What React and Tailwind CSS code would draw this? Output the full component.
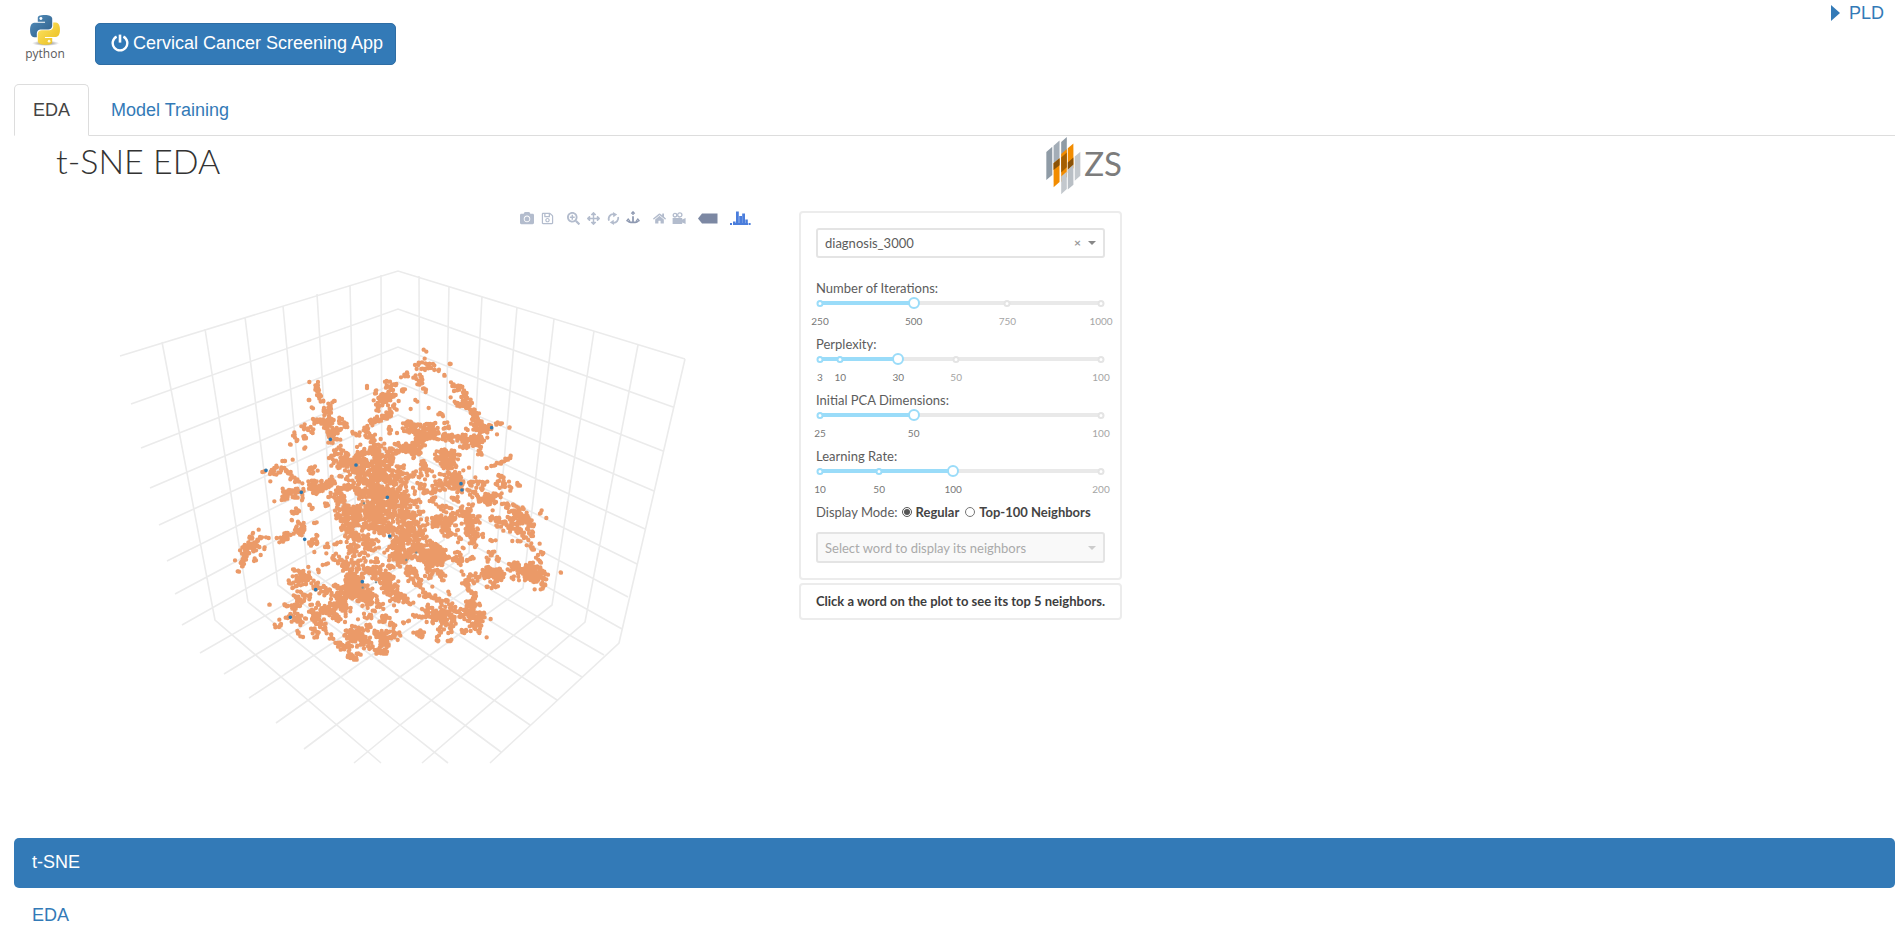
import React, { useState } from "react";
import {
  FaCamera,
  FaRegSave,
  FaSearchPlus,
  FaArrowsAlt,
  FaSyncAlt,
  FaHome,
  FaVideo,
} from "react-icons/fa";

/* ---------- scatter data ---------- */

// Each band: x1, y1, x2, y2, half width, number of points
const BANDS = [
  [581, 28, 597, 42, 2, 2], [585, 55, 585, 55, 1, 1], [560, 78, 605, 82, 9, 20], [605, 84, 628, 90, 5, 5],
  [656, 74, 663, 72, 3, 3], [642, 102, 648, 114, 3, 3], [510, 104, 535, 102, 8, 9], [552, 118, 572, 120, 12, 13],
  [663, 127, 663, 127, 1, 1], [672, 142, 698, 136, 9, 13], [582, 150, 584, 154, 7, 5], [515, 154, 530, 142, 5, 6],
  [700, 160, 738, 225, 9, 30], [678, 186, 706, 195, 9, 14], [662, 171, 662, 171, 1, 1], [556, 182, 565, 184, 3, 2],
  [541, 207, 541, 207, 1, 1], [597, 205, 597, 205, 1, 1], [610, 216, 645, 229, 4, 7], [648, 250, 650, 275, 9, 8],
  [735, 230, 760, 290, 12, 26], [725, 262, 785, 268, 11, 28], [785, 252, 815, 248, 5, 7], [838, 262, 838, 262, 2, 2],
  [800, 283, 800, 283, 1, 1], [705, 247, 712, 268, 5, 2], [740, 290, 770, 300, 8, 10], [745, 310, 750, 345, 7, 10],
  [410, 138, 412, 143, 2, 2], [430, 158, 446, 151, 5, 4], [445, 178, 492, 178, 15, 40], [478, 132, 480, 165, 10, 14],
  [485, 133, 502, 133, 5, 4], [466, 125, 466, 125, 1, 1], [442, 200, 446, 214, 6, 5], [428, 245, 490, 215, 9, 32],
  [412, 258, 412, 258, 1, 1], [480, 250, 480, 282, 4, 6], [502, 280, 502, 280, 1, 1],
  [262, 125, 262, 155, 7, 12], [265, 165, 278, 188, 7, 10], [239, 126, 239, 126, 1, 1], [236, 162, 236, 186, 2, 2],
  [246, 202, 251, 208, 2, 2], [292, 195, 292, 225, 10, 14], [302, 185, 314, 186, 4, 4], [250, 245, 335, 245, 9, 25],
  [290, 230, 310, 290, 12, 22], [300, 285, 330, 260, 9, 16], [340, 240, 352, 262, 7, 7], [362, 276, 378, 286, 4, 3],
  [275, 262, 290, 268, 8, 5], [205, 255, 245, 272, 8, 12], [222, 280, 228, 300, 6, 6], [190, 280, 202, 305, 7, 6],
  [180, 313, 183, 311, 4, 3], [222, 325, 232, 320, 3, 3], [290, 315, 318, 298, 7, 7], [330, 300, 330, 300, 2, 1],
  [395, 270, 430, 290, 10, 14], [378, 286, 412, 288, 4, 5], [382, 320, 382, 320, 1, 1], [452, 297, 452, 297, 1, 1],
  [420, 295, 435, 310, 9, 6], [520, 262, 620, 265, 13, 55], [555, 290, 615, 285, 14, 42], [620, 290, 755, 300, 10, 55],
  [500, 325, 575, 320, 12, 46], [530, 245, 535, 255, 6, 4], [555, 330, 560, 345, 12, 14], [480, 340, 500, 350, 15, 16],
  [625, 345, 685, 350, 16, 48], [690, 315, 735, 315, 8, 14], [640, 375, 672, 380, 12, 26],
  [320, 335, 335, 325, 9, 9], [312, 365, 400, 350, 17, 58], [350, 375, 420, 375, 14, 38], [405, 325, 465, 330, 14, 32],
  [430, 350, 480, 360, 15, 34], [395, 395, 480, 395, 20, 95], [405, 430, 475, 430, 20, 95], [410, 470, 480, 475, 24, 115],
  [405, 510, 490, 510, 20, 90], [395, 545, 450, 545, 18, 46], [430, 560, 480, 560, 22, 45], [485, 450, 520, 470, 20, 34],
  [500, 385, 530, 430, 18, 32], [500, 490, 550, 490, 18, 30], [500, 520, 555, 550, 22, 65], [505, 570, 555, 600, 22, 75],
  [475, 640, 540, 640, 22, 65], [500, 600, 500, 625, 15, 30], [550, 575, 585, 580, 14, 18], [545, 625, 580, 610, 15, 22],
  [585, 620, 640, 650, 20, 60], [590, 655, 645, 660, 18, 50], [565, 640, 585, 650, 15, 20], [560, 490, 570, 520, 9, 8],
  [545, 405, 575, 420, 14, 14], [580, 375, 600, 395, 13, 15], [560, 455, 625, 440, 14, 20], [600, 465, 620, 495, 9, 11],
  [615, 425, 690, 410, 15, 42], [640, 440, 690, 435, 12, 18], [680, 400, 690, 470, 12, 22], [675, 475, 685, 475, 9, 8],
  [717, 383, 717, 383, 1, 1], [700, 390, 700, 390, 1, 1], [735, 412, 735, 412, 1, 1], [705, 442, 760, 440, 13, 22],
  [760, 432, 770, 424, 4, 5], [770, 383, 770, 383, 1, 1], [785, 382, 842, 350, 5, 20], [800, 400, 810, 412, 3, 3],
  [810, 425, 835, 440, 15, 18], [858, 430, 876, 440, 5, 5], [800, 455, 812, 465, 8, 4], [725, 465, 740, 470, 8, 7],
  [755, 480, 800, 475, 12, 24], [770, 455, 790, 500, 10, 17], [820, 495, 835, 500, 6, 5],
  [835, 500, 880, 520, 12, 26], [860, 530, 905, 545, 15, 38], [800, 545, 850, 545, 13, 22], [820, 565, 870, 565, 14, 22],
  [937, 504, 930, 522, 3, 3], [948, 533, 948, 533, 1, 1], [780, 530, 800, 545, 8, 5], [880, 570, 910, 590, 15, 12],
  [765, 602, 802, 602, 2, 5], [830, 605, 875, 605, 4, 5], [895, 610, 905, 640, 8, 8], [925, 610, 930, 640, 8, 5],
  [915, 655, 938, 670, 7, 6], [720, 500, 725, 500, 8, 6], [640, 510, 670, 510, 12, 10], [680, 515, 735, 530, 16, 45],
  [600, 548, 670, 540, 16, 55], [640, 575, 670, 570, 15, 22], [700, 545, 740, 560, 16, 32], [720, 570, 735, 610, 12, 22],
  [740, 580, 760, 585, 8, 7], [680, 590, 700, 625, 8, 8], [670, 655, 695, 665, 10, 14], [710, 664, 735, 650, 5, 9],
  [672, 635, 690, 640, 6, 5], [790, 630, 780, 645, 8, 7], [800, 650, 805, 665, 6, 5], [771, 655, 771, 680, 7, 6],
  [840, 675, 880, 690, 13, 18], [870, 705, 925, 700, 14, 38], [900, 690, 935, 715, 20, 60], [908, 745, 945, 750, 4, 3],
  [840, 715, 850, 715, 7, 3], [932, 725, 944, 745, 4, 4], [990, 697, 993, 698, 1, 2], [755, 700, 800, 695, 12, 24],
  [780, 715, 815, 700, 14, 34], [765, 735, 805, 740, 6, 10], [705, 720, 740, 715, 13, 25], [700, 735, 715, 745, 8, 10],
  [730, 755, 735, 775, 8, 9], [695, 693, 695, 693, 1, 1], [720, 780, 720, 815, 12, 18], [700, 785, 745, 790, 9, 14],
  [725, 820, 755, 830, 14, 30], [725, 845, 745, 860, 12, 22], [760, 818, 764, 820, 2, 2], [781, 838, 782, 838, 1, 1],
  [770, 892, 770, 892, 1, 1], [700, 875, 720, 870, 8, 8], [745, 875, 750, 878, 3, 3], [685, 810, 705, 825, 13, 14],
  [600, 830, 680, 830, 16, 60], [640, 815, 665, 860, 14, 26], [590, 800, 605, 815, 12, 12], [640, 795, 670, 795, 12, 12],
  [550, 825, 590, 830, 6, 9], [575, 770, 605, 765, 12, 14], [608, 740, 610, 740, 2, 1], [657, 755, 658, 765, 3, 2],
  [615, 775, 640, 785, 6, 5], [568, 880, 585, 885, 8, 14], [550, 878, 550, 878, 1, 1], [626, 890, 620, 910, 5, 5],
  [655, 902, 665, 905, 6, 7], [630, 865, 655, 875, 10, 9],
  [108, 392, 98, 396, 3, 3], [130, 395, 160, 385, 14, 18], [122, 423, 122, 423, 1, 1], [155, 362, 165, 362, 3, 3],
  [188, 359, 188, 359, 1, 1], [165, 385, 180, 400, 7, 7], [180, 405, 190, 422, 8, 7], [195, 422, 215, 425, 7, 6],
  [150, 462, 210, 460, 12, 36], [132, 482, 134, 484, 1, 1], [155, 475, 165, 478, 6, 5], [218, 440, 218, 485, 5, 6],
  [240, 385, 265, 383, 8, 9], [242, 400, 255, 400, 4, 3], [235, 430, 300, 435, 12, 34], [240, 450, 280, 440, 12, 16],
  [300, 405, 310, 430, 7, 6], [305, 455, 340, 470, 15, 26], [340, 440, 365, 440, 10, 12], [330, 405, 335, 412, 5, 3],
  [345, 398, 400, 425, 14, 22], [370, 450, 395, 465, 10, 14], [285, 490, 293, 503, 6, 6], [240, 485, 245, 510, 5, 5],
  [320, 480, 345, 495, 8, 6], [315, 520, 390, 520, 15, 46], [340, 505, 375, 510, 12, 18], [330, 545, 390, 560, 16, 35],
  [340, 575, 385, 585, 13, 22], [375, 600, 430, 600, 14, 20], [350, 605, 350, 605, 2, 1], [190, 505, 205, 530, 8, 10],
  [185, 540, 185, 540, 2, 2], [210, 545, 215, 580, 12, 18], [195, 575, 225, 575, 9, 12], [248, 549, 265, 549, 3, 4],
  [155, 602, 178, 580, 9, 15], [140, 594, 140, 594, 1, 1], [225, 605, 260, 605, 9, 12], [255, 585, 265, 590, 3, 3],
  [253, 636, 253, 636, 1, 1], [285, 612, 295, 620, 7, 4], [310, 610, 330, 610, 5, 4], [287, 640, 290, 640, 1, 1],
  [310, 640, 345, 680, 11, 20], [275, 678, 292, 670, 4, 4], [350, 640, 385, 640, 10, 12], [360, 615, 400, 630, 12, 12],
  [400, 610, 450, 620, 14, 18], [400, 645, 440, 660, 14, 14], [345, 670, 400, 670, 12, 16], [345, 690, 390, 700, 14, 16],
  [400, 690, 450, 690, 10, 22], [430, 705, 490, 725, 14, 44], [460, 740, 500, 755, 15, 34], [490, 765, 545, 785, 9, 24],
  [460, 680, 540, 675, 10, 14], [525, 690, 560, 700, 11, 25], [535, 720, 570, 720, 8, 9], [590, 700, 600, 712, 12, 8],
  [570, 680, 600, 690, 8, 8], [625, 700, 645, 715, 9, 12], [560, 735, 575, 740, 8, 7], [600, 680, 620, 690, 7, 5],
  [85, 569, 85, 569, 1, 1], [70, 580, 55, 605, 6, 8], [90, 590, 112, 597, 5, 5], [75, 600, 65, 635, 10, 17],
  [55, 615, 35, 640, 8, 16], [50, 640, 32, 680, 7, 18], [28, 690, 25, 704, 4, 4], [90, 620, 108, 625, 4, 4],
  [68, 665, 90, 645, 5, 4], [15, 662, 15, 662, 1, 1], [40, 660, 48, 660, 3, 3],
  [235, 681, 235, 681, 1, 1], [263, 692, 270, 704, 6, 3], [190, 690, 195, 695, 4, 3], [185, 722, 240, 715, 14, 34],
  [205, 700, 225, 700, 10, 9], [190, 745, 190, 745, 3, 2], [245, 735, 265, 735, 10, 10], [265, 745, 300, 760, 11, 18],
  [305, 735, 330, 740, 7, 9], [330, 760, 385, 745, 15, 46], [360, 735, 410, 760, 18, 70], [380, 770, 430, 770, 13, 40],
  [400, 780, 425, 790, 7, 14], [300, 785, 345, 790, 14, 30], [330, 800, 355, 805, 11, 16], [355, 715, 390, 720, 12, 20],
  [200, 770, 220, 775, 14, 16], [185, 800, 215, 790, 9, 13], [165, 795, 175, 805, 6, 6], [117, 793, 119, 794, 1, 2],
  [230, 765, 245, 775, 8, 5], [240, 800, 260, 830, 10, 14], [180, 830, 215, 830, 12, 18], [190, 845, 225, 845, 8, 8],
  [140, 855, 158, 845, 8, 9], [135, 863, 135, 863, 2, 1], [200, 870, 216, 892, 5, 5], [265, 800, 305, 820, 12, 22],
  [255, 840, 290, 850, 12, 18], [245, 870, 270, 875, 8, 9], [250, 892, 272, 892, 3, 4], [285, 865, 300, 880, 8, 7],
  [292, 895, 312, 895, 3, 4], [310, 830, 345, 845, 10, 12], [305, 800, 320, 835, 9, 10], [345, 820, 350, 830, 5, 3],
  [400, 800, 415, 835, 9, 12], [383, 838, 383, 838, 1, 1], [435, 790, 460, 800, 9, 10], [450, 838, 480, 838, 9, 15],
  [430, 815, 445, 815, 5, 3], [485, 780, 500, 790, 9, 8], [500, 812, 500, 812, 2, 1], [510, 860, 535, 838, 5, 5],
  [480, 850, 495, 862, 7, 8], [365, 865, 395, 875, 10, 14], [410, 850, 420, 870, 7, 7], [345, 880, 410, 900, 12, 34],
  [320, 915, 360, 925, 11, 20], [365, 905, 420, 905, 12, 24], [355, 945, 385, 950, 9, 18], [410, 925, 430, 920, 9, 8],
  [440, 890, 500, 885, 12, 38], [450, 905, 470, 910, 12, 22], [440, 935, 468, 930, 9, 20], [425, 870, 440, 882, 5, 4],
];

const HIGHLIGHTS = [
  [785, 263], [301, 298], [378, 375], [108, 391], [214, 457], [472, 472], [693, 431], [696, 450],
  [479, 588], [224, 598], [397, 725], [257, 749], [181, 832],
];

const SMALL_HIGHLIGHTS = [[402, 490], [559, 638], [529, 660], [398, 743], [438, 727]];

function scatterPath() {
  let seed = 20177;
  const rand = () => {
    seed = (seed * 1664525 + 1013904223) % 4294967296;
    return seed / 4294967296;
  };
  let d = "";
  BANDS.forEach(([x1, y1, x2, y2, w, n]) => {
    const spread = w > 7 ? w * 1.35 : w;
    const count = n > 10 ? Math.round(n * 1.15) : n;
    for (let i = 0; i < count; i++) {
      const t = n === 1 ? 0.5 : rand();
      const a = rand() * Math.PI * 2;
      const r = Math.sqrt(rand()) * spread;
      const x = Math.round(x1 + (x2 - x1) * t + Math.cos(a) * r);
      const y = Math.round(y1 + (y2 - y1) * t + Math.sin(a) * r);
      d += `M${x} ${y}h.1`;
    }
  });
  return d;
}

const POINTS = scatterPath();
const dots = (list) => list.map(([x, y]) => `M${x} ${y}h.1`).join("");

const GRID = [
  // left wall, horizontals
  "M120 356L398 271L685 359", "M131 404L398 309L673 407", "M141 448L398 347L663 451", "M150 488L398 382L654 491",
  "M159 525L398 415L645 529", "M167 561L398 446L637 564", "M175 594L398 475L628 597", "M182 625L398 503L622 629",
  // verticals running on into the floor
  "M162 342L215 620L381 763", "M205 329L248 602L400 725L448 763", "M245 317L278 585L400 677L501 752",
  "M283 306L307 568L400 635L530 725", "M317 294L333 552L557 700", "M350 285L356 539L582 677", "M381 275L382 527L604 655",
  "M685 359L619 643L490 763", "M638 345L585 622L422 763", "M594 331L552 605L400 725L354 763",
  "M554 319L523 588L400 677L304 749", "M517 307L495 570L400 635L276 723", "M482 296L469 553L249 698",
  "M449 286L444 540L224 674", "M419 276L420 527L200 653",
].join("");

function TsnePlot() {
  return (
    <svg viewBox="100 230 600 534" className="block w-full" role="img" aria-label="t-SNE scatter plot">
      <path d={GRID} fill="none" stroke="#ebebeb" strokeWidth="1.6" />
      <g transform="translate(230 340) scale(.3333)" fill="none" strokeLinecap="round">
        <path d={POINTS} stroke="#eb9a68" strokeWidth="13" />
        <path d={dots(HIGHLIGHTS)} stroke="#2b78b0" strokeWidth="11" />
        <path d={dots(SMALL_HIGHLIGHTS)} stroke="#7d8f92" strokeWidth="7" />
      </g>
    </svg>
  );
}

/* ---------- logos and icons ---------- */

function PythonLogo() {
  return (
    <svg viewBox="0 0 24 25" className="h-[31px] w-[30px]" aria-hidden="true">
      <defs>
        <linearGradient id="pyBlue" x1="0" y1="0" x2="1" y2="1">
          <stop offset="0" stopColor="#5590bd" />
          <stop offset="1" stopColor="#2c5c88" />
        </linearGradient>
        <linearGradient id="pyYellow" x1="0" y1="0" x2="1" y2="1">
          <stop offset="0" stopColor="#ffe566" />
          <stop offset="1" stopColor="#e8bc1c" />
        </linearGradient>
        <radialGradient id="pyShade">
          <stop offset="0" stopColor="#666" />
          <stop offset="1" stopColor="#777" stopOpacity="0" />
        </radialGradient>
      </defs>
      <ellipse cx="12.5" cy="22.8" rx="11" ry="2.2" fill="url(#pyShade)" />
      <path
        fill="url(#pyBlue)"
        d="M14.25.18l.9.2.73.26.59.3.45.32.34.34.25.34.16.33.1.3.04.26.02.2-.01.13V8.5l-.05.63-.13.55-.21.46-.26.38-.3.31-.33.25-.35.19-.35.14-.33.1-.3.07-.26.04-.21.02H8.77l-.69.05-.59.14-.5.22-.41.27-.33.32-.27.35-.2.36-.15.37-.1.35-.07.32-.04.27-.02.21v3.06H3.17l-.21-.03-.28-.07-.32-.12-.35-.18-.36-.26-.36-.36-.35-.46-.32-.59-.28-.73-.21-.88-.14-1.05-.05-1.23.06-1.22.16-1.04.24-.87.32-.71.36-.57.4-.44.42-.33.42-.24.4-.16.36-.1.32-.05.24-.01h.16l.06.01h8.16v-.83H6.18l-.01-2.75-.02-.37.05-.34.11-.31.17-.28.25-.26.31-.23.38-.2.44-.18.51-.15.58-.12.64-.1.71-.06.77-.04.84-.02 1.27.05z"
      />
      <path
        fill="url(#pyYellow)"
        d="M21.04 6.11l.28.06.32.12.35.18.36.27.36.35.35.47.32.59.28.73.21.88.14 1.04.05 1.23-.06 1.23-.16 1.04-.24.86-.32.71-.36.57-.4.45-.42.33-.42.24-.4.16-.36.09-.32.05-.24.02-.16-.01h-8.22v.82h5.84l.01 2.76.02.36-.05.34-.11.31-.17.29-.25.25-.31.24-.38.2-.44.17-.51.15-.58.13-.64.09-.71.07-.77.04-.84.01-1.27-.04-1.07-.14-.9-.2-.73-.25-.59-.3-.45-.33-.34-.34-.25-.34-.16-.33-.1-.3-.04-.25-.02-.2.01-.13v-5.34l.05-.64.13-.54.21-.46.26-.38.3-.32.33-.24.35-.2.35-.14.33-.1.3-.06.26-.04.21-.02.13-.01h5.84l.69-.05.59-.14.5-.21.41-.28.33-.32.27-.35.2-.36.15-.36.1-.35.07-.32.04-.28.02-.21V6.07h2.09l.14.01z"
      />
      <circle cx="8.7" cy="2.9" r="1.2" fill="#fff" />
      <circle cx="15.3" cy="21.1" r="1.1" fill="#fffbe0" />
    </svg>
  );
}

function PowerIcon() {
  return (
    <svg viewBox="0 0 18 18" className="h-[18px] w-[18px]" fill="none" stroke="#fff" aria-hidden="true">
      <path d="M5.6 2.6A7.3 7.3 0 1 0 12.4 2.6" strokeWidth="2.4" />
      <path d="M9 .6V8.6" strokeWidth="2.6" />
    </svg>
  );
}

function ZsMark() {
  return (
    <svg viewBox="84 18 106 178" className="h-[59px] w-[35px]" aria-hidden="true">
      <path d="M85 66L103 50V136L85 151Z" fill="#8f9ba6" />
      <path d="M107 47L125 31V104L107 120Z" fill="#a3adb7" />
      <path d="M130 36L147 21V94L130 110Z" fill="#8f9ba6" />
      <path d="M107 100L125 85V157L107 173Z" fill="#f28c00" />
      <path d="M130 72L147 57V142L130 157Z" fill="#f28c00" />
      <path d="M150 55L167 40V115L150 130Z" fill="#f28c00" />
      <path d="M130 140L147 125V178L130 194Z" fill="#c3c8cd" />
      <path d="M150 118L167 103V165L150 180Z" fill="#b9bfc5" />
      <path d="M171 80L188 65V138L171 153Z" fill="#c3c8cd" />
      <path d="M107 100L125 85V106L107 121Z" fill="#8a5208" />
      <path d="M130 83L147 68V112L130 128Z" fill="#a35f04" />
      <path d="M150 98L167 83V104L150 119Z" fill="#8a5208" />
    </svg>
  );
}

function TurntableIcon() {
  return (
    <svg viewBox="0 0 16 16" className="h-[14px] w-[14px]" fill="none" stroke="currentColor" aria-hidden="true">
      <path d="M8 6V13" strokeWidth="2" />
      <path d="M8 1.5V4.5M6 3L8 1L10 3" strokeWidth="1.6" />
      <path d="M2 10.5C1 14 15 14 14 10.5" strokeWidth="2" />
      <path d="M.5 11.5L2.5 9L4.5 11.5M11.5 11.5L13.5 9L15.5 11.5" strokeWidth="1.2" />
    </svg>
  );
}

function MovieCameraIcon() {
  return (
    <svg viewBox="0 0 14 13" className="h-[13px] w-[14px]" aria-hidden="true">
      <circle cx="3" cy="3.2" r="1.8" fill="none" stroke="currentColor" strokeWidth="1.3" />
      <circle cx="7.8" cy="2.9" r="2.1" fill="none" stroke="currentColor" strokeWidth="1.3" />
      <path d="M.6 6h9.6v1.6L13.6 6v6l-3.4-1.6V12H.6z" fill="currentColor" />
    </svg>
  );
}

function OrbitIcon() {
  return (
    <svg viewBox="0 0 14 14" className="h-[13px] w-[13px]" aria-hidden="true">
      <path d="M2.2 9.2A5 5 0 0 1 7.6 2.4" fill="none" stroke="currentColor" strokeWidth="2" />
      <path d="M6.4 0L11 2.8L6.8 5.6Z" fill="currentColor" />
      <path d="M12 5.4A5 5 0 0 1 6.6 11.6" fill="none" stroke="currentColor" strokeWidth="2" />
      <path d="M7.6 14L3 11.4L7.2 8.4Z" fill="currentColor" />
    </svg>
  );
}

function TagIcon() {
  return (
    <svg viewBox="0 0 20 11" className="h-[11px] w-[20px]" aria-hidden="true">
      <path d="M0 5.5L4 .5H19.5V10.5H4Z" fill="#7c88a3" />
    </svg>
  );
}

function PlotlyIcon() {
  return (
    <svg viewBox="0 0 21 14" className="h-[14px] w-[21px]" fill="#4a7ddc" aria-hidden="true">
      <path d="M0 12h2v2H0zM3 10.5h2.6V14H3zM6 .5h2.8V14H6zM9.2 5h2.8v9H9.2zM12.2 2.5h2.8V14h-2.8zM15.3 8.5h2.5V14h-2.5zM18.6 12h2v2h-2z" />
      <path d="M3 12h15v2H3z" />
    </svg>
  );
}

const TOOL_GROUPS = [
  [
    { label: "Download plot", icon: <FaCamera size={14} /> },
    { label: "Save and edit plot", icon: <FaRegSave size={13} /> },
  ],
  [
    { label: "Zoom", icon: <FaSearchPlus size={13} /> },
    { label: "Pan", icon: <FaArrowsAlt size={13} /> },
    { label: "Orbital rotation", icon: <OrbitIcon /> },
    { label: "Turntable rotation", icon: <TurntableIcon />, active: true },
  ],
  [
    { label: "Reset camera to default", icon: <FaHome size={13} /> },
    { label: "Reset camera to last save", icon: <MovieCameraIcon /> },
  ],
];

function ModeBar() {
  return (
    <div className="flex h-[14px] items-center justify-end gap-[12px] pr-[48px]">
      {TOOL_GROUPS.map((group, i) => (
        <div key={i} className="flex items-center gap-[6px]">
          {group.map((tool) => (
            <button
              key={tool.label}
              type="button"
              aria-label={tool.label}
              className={
                tool.active
                  ? "flex w-[14px] justify-center text-[#8e99b1]"
                  : "flex w-[14px] justify-center text-[#b3bccd]"
              }
            >
              {tool.icon}
            </button>
          ))}
        </div>
      ))}
      <button type="button" aria-label="Show closest data on hover">
        <TagIcon />
      </button>
      <a href="#plotly" aria-label="Produced with Plotly">
        <PlotlyIcon />
      </a>
    </div>
  );
}

/* ---------- controls ---------- */

const SLIDERS = [
  { id: "iterations", label: "Number of Iterations:", min: 250, max: 1000, value: 500, marks: [250, 500, 750, 1000] },
  { id: "perplexity", label: "Perplexity:", min: 3, max: 100, value: 30, marks: [3, 10, 30, 50, 100] },
  { id: "pca", label: "Initial PCA Dimensions:", min: 25, max: 100, value: 50, marks: [25, 50, 100] },
  { id: "rate", label: "Learning Rate:", min: 10, max: 200, value: 100, marks: [10, 50, 100, 200] },
];

function MarkedSlider({ id, label, min, max, value: initial, marks }) {
  const [value, setValue] = useState(initial);
  const at = (v) => `${((v - min) / (max - min)) * 100}%`;
  return (
    <div className="h-14">
      <label htmlFor={id} className="block h-[18px] text-[13px] leading-[18px] text-[#5c5c5c]">
        {label}
      </label>
      <div className="relative mx-1 h-3">
        <div className="absolute inset-x-0 top-[4px] h-1 rounded bg-[#e9e9e9]" />
        <div className="absolute left-0 top-[4px] h-1 rounded bg-[#9adcf9]" style={{ width: at(value) }} />
        {marks.map((m) => (
          <span
            key={m}
            className={
              m <= value
                ? "absolute top-[3px] h-[7px] w-[7px] -translate-x-1/2 rounded-full border-2 border-[#9adcf9] bg-white"
                : "absolute top-[3px] h-[7px] w-[7px] -translate-x-1/2 rounded-full border-2 border-[#e4e4e4] bg-white"
            }
            style={{ left: at(m) }}
          />
        ))}
        <span
          className="absolute top-0 h-3 w-3 -translate-x-1/2 rounded-full border-2 border-[#9adcf9] bg-white"
          style={{ left: at(value) }}
        />
        <input
          id={id}
          type="range"
          min={min}
          max={max}
          value={value}
          onChange={(e) => setValue(Number(e.target.value))}
          className="absolute inset-0 w-full cursor-pointer opacity-0"
        />
      </div>
      <div className="relative mx-1 h-[24px] text-[10px] leading-[24px]">
        {marks.map((m) => (
          <span
            key={m}
            className={
              m <= value
                ? "absolute -translate-x-1/2 text-[#777]"
                : "absolute -translate-x-1/2 text-[#a5a5a5]"
            }
            style={{ left: at(m) }}
          >
            {m}
          </span>
        ))}
      </div>
    </div>
  );
}

function ControlPanel() {
  const [mode, setMode] = useState("regular");
  return (
    <aside className="flex w-[323px] shrink-0 flex-col gap-[3px] text-[13px]">
      <div className="rounded border-2 border-[#ececec] px-[15px] pb-[15px] pt-[15px]">
        <div className="relative">
          <select
            aria-label="Dataset"
            className="block h-[30px] w-full appearance-none rounded-[3px] border-2 border-[#e4e4e4] bg-white pl-[7px] pr-10 text-[13px] text-[#5c5c5c]"
          >
            <option>diagnosis_3000</option>
          </select>
          <button
            type="button"
            aria-label="Clear dataset"
            className="absolute right-[24px] top-[9px] text-[12px] font-bold leading-3 text-[#999]"
          >
            ×
          </button>
          <span className="pointer-events-none absolute right-[9px] top-[13px] border-x-4 border-t-4 border-x-transparent border-t-[#888]" />
        </div>
        <div className="pt-[21px]">
          {SLIDERS.map((s) => (
            <MarkedSlider key={s.id} {...s} />
          ))}
        </div>
        <fieldset className="flex h-[18px] items-center whitespace-nowrap text-[#444]">
          <legend className="float-left pr-1 leading-[18px] text-[#5c5c5c]">Display Mode:</legend>
          <label className="flex items-center gap-1 pr-[6px] font-bold">
            <input
              type="radio"
              name="mode"
              className="h-[10px] w-[10px] accent-[#555]"
              checked={mode === "regular"}
              onChange={() => setMode("regular")}
            />
            Regular
          </label>
          <label className="flex items-center gap-1 font-bold">
            <input
              type="radio"
              name="mode"
              className="h-[10px] w-[10px] accent-[#555]"
              checked={mode === "top"}
              onChange={() => setMode("top")}
            />
            Top-100 Neighbors
          </label>
        </fieldset>
        <div className="relative mt-[11px]">
          <select
            aria-label="Word"
            disabled
            className="block h-[31px] w-full appearance-none rounded-[3px] border-2 border-[#e4e4e4] bg-[#f9f9f9] pl-[7px] pr-8 text-[13px] text-[#aaa] opacity-100"
          >
            <option>Select word to display its neighbors</option>
          </select>
          <span className="pointer-events-none absolute right-[9px] top-[14px] border-x-4 border-t-4 border-x-transparent border-t-[#ccc]" />
        </div>
      </div>
      <div className="flex h-[37px] items-center justify-center whitespace-nowrap rounded border-2 border-[#ececec] pb-[2px] font-bold text-[#3d3d3d]">
        Click a word on the plot to see its top 5 neighbors.
      </div>
    </aside>
  );
}

/* ---------- page ---------- */

export default function App() {
  return (
    <div className="bg-white pl-[14px] pr-[5px] font-['Liberation_Sans',Arial,sans-serif] text-[18px] leading-[26px] text-[#333]">
      <header className="flex h-[84px] items-start">
        <div className="flex w-[81px] flex-col items-center pr-[19px] pt-[15px]">
          <PythonLogo />
          <span className="font-['Open_Sans',sans-serif] text-[12px] leading-[16px] text-[#5a5a5a]">python</span>
        </div>
        <button
          type="button"
          className="mt-[23px] flex h-[42px] items-center gap-[4px] rounded-[5px] border border-[#2e6da4] bg-[#337ab7] pb-[2px] pl-[15px] pr-3 text-white"
        >
          <PowerIcon />
          <span>Cervical Cancer Screening App</span>
        </button>
        <a href="#pld" className="ml-auto mr-[11px] flex items-center gap-[9px] text-[#337ab7]">
          <span className="border-y-8 border-l-[9px] border-y-transparent border-l-[#337ab7]" />
          PLD
        </a>
      </header>

      <nav className="flex h-[52px] gap-1 border-b border-[#ddd]">
        <a href="#eda" className="-mb-px flex items-center rounded-t-[5px] border border-[#ddd] border-b-white bg-white px-[18px] text-[#444]">
          EDA
        </a>
        <a href="#training" className="flex items-center px-[18px] text-[#337ab7]">
          Model Training
        </a>
      </nav>

      <main className="min-h-[702px] max-w-[1108px] font-['Lato','Open_Sans',sans-serif]">
        <div className="flex h-[75px] items-start justify-between pl-[42px]">
          <h1 className="pt-[3px] text-[34px] font-light leading-[44px] text-[#333]">t-SNE EDA</h1>
          <div className="flex items-center gap-[3px] text-[33px] leading-[44px] text-[#7c7c7c]">
            <ZsMark />
            <span className="pb-[6px]">ZS</span>
          </div>
        </div>
        <div className="flex items-start">
          <section className="min-w-0 flex-1">
            <ModeBar />
            <div className="ml-[86px] mr-[99px] mt-[5px]">
              <TsnePlot />
            </div>
          </section>
          <ControlPanel />
        </div>
      </main>

      <nav className="flex flex-col gap-[2px]">
        <a href="#tsne" className="flex h-[50px] items-center rounded-[5px] bg-[#337ab7] px-[18px] pb-[2px] text-white">
          t-SNE
        </a>
        <a href="#eda-pill" className="flex h-[50px] items-center px-[18px] text-[#337ab7]">
          EDA
        </a>
      </nav>
    </div>
  );
}
